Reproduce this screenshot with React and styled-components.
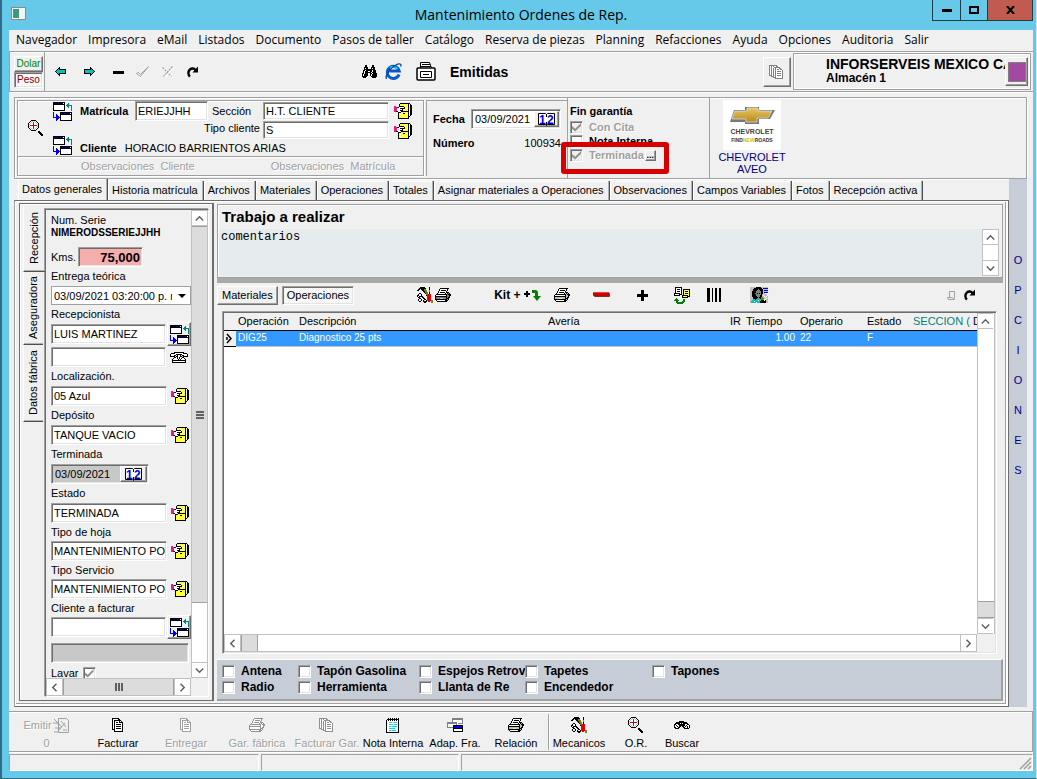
import React from 'react';
import styled, { createGlobalStyle, css } from 'styled-components';

const GlobalStyle = createGlobalStyle`
  * { box-sizing: border-box; }
  body { margin: 0; background: #f0f0f0; color: #000; font: 11px/14px "Liberation Sans", Arial, sans-serif; }
  button, input, select, textarea { font: inherit; color: inherit; margin: 0; border-radius: 0; }
  button { padding: 0; border: 0; background: none; white-space: nowrap; }
  svg { display: block; flex: none; }
`;

/* ---------- bevels ---------- */

const sunken = css`
  border: 1px solid;
  border-color: #a0a0a0 #fff #fff #a0a0a0;
  box-shadow: inset 1px 1px 0 #6d6d6d, inset -1px -1px 0 #e3e3e3;
`;

const raised = css`
  border: 1px solid;
  border-color: #fff #6d6d6d #6d6d6d #fff;
  box-shadow: inset -1px -1px 0 #a0a0a0;
`;

const etched = css`
  border: 1px solid #a0a0a0;
  box-shadow: inset 1px 1px 0 #fff, 1px 1px 0 #fff;
`;

const disabledText = css`
  color: #a0a0a0;
  text-shadow: 1px 1px 0 #fff;
`;

/* ---------- icons ---------- */

const palette = {
  k: '#000', w: '#fff', y: '#ffff33', m: '#f0148c', n: '#000080', b: '#0000f0', t: '#008080',
  r: '#e00000', o: '#808000', g: '#c0c0c0', d: '#808080', c: '#00e0e8', e: '#008000', u: '#00c4c4',
};

function Pixels({ rows, ink, ...rest }) {
  const width = Math.max(...rows.map((r) => r.length));
  return (
    <svg width={width} height={rows.length} viewBox={`0 0 ${width} ${rows.length}`} shapeRendering="crispEdges" {...rest}>
      {rows.map((row, y) =>
        [...row].map((c, x) =>
          c === '.' ? null : <rect key={`${x}-${y}`} x={x} y={y} width="1" height="1" fill={c === 'k' && ink ? ink : palette[c]} />
        )
      )}
    </svg>
  );
}

const windowsRows = [
  'kkkkkkkkkkkk.......',
  'knnnnnnnnkwk...t...',
  'kkkkkkkkkkkk..tt...',
  'kwwwwwwwwwwk.tttttt',
  'kwwwwwwwwwwk..tt..t',
  'kwwwwwwwwwwk...t..t',
  'kwwwwwwwwwwk......t',
  'kwwwwwwwwwwk......t',
  'kkkkkkkkkkkk......t',
  '...................',
  'b......kkkkkkkkkkkk',
  'b......knnnnnnnnkwk',
  'b..b...kkkkkkkkkkkk',
  'b..bb..kwwwwwwwwwwk',
  'b..bbb.kwwwwwwwwwwk',
  'bbbbbbbkwwwwwwwwwwk',
  '...bbb.kwwwwwwwwwwk',
  '...bb..kwwwwwwwwwwk',
  '...b...kkkkkkkkkkkk',
];

const cardRows = [
  '......kkkkkkkkkk..',
  '.....kyyyyyyyykwk.',
  '.....kywyywyywkwkk',
  'mm...kkkkkyyyykwkk',
  'mmmkkwwwwwkyywkwkk',
  'mmmwwwkkkkkyyykwkk',
  'mmmwwwwwkyywyykwkk',
  'mmmwwwkkkyyyyykwkk',
  'mmkkwwwkkkkkkkkwkk',
  '....kkkyyyyyyykwkk',
  '....kywyykkywykwkk',
  '....kyyyyyyyyykwkk',
  '....kyyywyyyyykwk.',
  '....kywyyyywyykk..',
  '....kyyyyyyyyyk...',
  '....kkkkkkkkkkk...',
];

const magnifierRows = [
  '...kkkkk........',
  '..kwgwgwk.......',
  '.kwgwrwgwk......',
  'kwgwwrwwgwk.....',
  'kgwwwrwwwgk.....',
  'kwrrrrrrrwk.....',
  'kgwwwrwwwgk.....',
  'kwgwwrwwgwk.....',
  '.kwgwrwgwk......',
  '..kwgwgwk.......',
  '...kkkkk.y......',
  '.........ykk....',
  '..........kkk...',
  '...........kkk..',
  '............kkk.',
  '.............kk.',
];

const printerRows = [
  '.....kkkkkkkkk..',
  '....kwwwwwwwk...',
  '....kwkkkkkwk...',
  '...kwwwwwwwk....',
  '...kwkkkkkwkkk..',
  '..kwwwwwwwkwkgk.',
  '.kkkkkkkkkkkgkkk',
  'kwwwwwwwwwwkggkk',
  'kkkkkkkkkkkkggk.',
  'kggggggggggkgkk.',
  'kggggyyygggkkk..',
  'kkkkkkkkkkkkgk..',
  '.kwwwwwwwwkkk...',
  '..kkkkkkkkkk....',
];

const darkPrinterRows = printerRows.map((r) => r.replace(/g/g, 'd').replace(/y/g, 'g'));

const toolsRows = [
  '...kkkkk....k...',
  '..kkkkkkk...k...',
  '.kk.kkkoo...k...',
  'kk...kkooo..d...',
  '......kkoo..d...',
  '.......kooo.k...',
  '..kk....koo.k...',
  '.k..k....oorrr..',
  'kk..k....krrrr..',
  'k.kkkk....rrrr..',
  '.kk..kk...rrrr..',
  '..kk..kk..rrrr..',
  '.k..k..kk.rrrr..',
  '.k..k.k..korrroo',
  '..kk..kkkk.rr.oo',
  '.......kk.....oo',
];

const binocularsRows = [
  '...kk.....kk...',
  '...kk.....kk...',
  '..kkkk...kkkk..',
  '..kwkk...kwkk..',
  '..kkkkkkkkkkk..',
  '.kkwkkkkkkwkkk.',
  '.kwkkkwwkkwkkk.',
  '.kwkkkkkkwkkkk.',
  'kkwkkkwwkkwkkkk',
  'kwkkkk..kwkkkkk',
  'kwkkkk..kwkkkkk',
  'kkkkk....kkkkkk',
  '.kkk......kkkk.',
];

const fieldGlassRows = [
  '.....kkkkk......',
  '..kkkkkkkkkkk...',
  '.kkkkkwkwkkkkk..',
  'kkwwkkkkkkkwwkk.',
  'kwkwwkkkkkkwkwwk',
  'kwwkwkk.kkwkwkwk',
  'kkwwkk...kkwwkwk',
  '.kkkk.....kkkkk.',
];

const docsRows = [
  'kkkkkkk.....',
  'kwwwwwkk....',
  'kwkkkkkkk...',
  'kwkwwwwkwk..',
  'kwkwkkwkkkk.',
  'kwkwwwwwwwk.',
  'kwkwkkkkkwk.',
  'kwkwwwwwwwk.',
  'kwkwkkkkkwk.',
  'kwkwwwwwwwk.',
  'kwkwkkkkkwk.',
  'kkkwwwwwwwk.',
  '..kwwwwwwwk.',
  '..kkkkkkkkk.',
];

const manyDocsRows = [
  'kkkkkkkk........',
  'kwkwkwwkk.......',
  'kwkwwkkkkkk.....',
  'kwkwkwkwwwkk....',
  'kwkwkwkwkkwkk...',
  'kwkwkwkwwwwwwk..',
  'kwkwkwkwkkkkwk..',
  'kwkwkwkwwwwwwk..',
  'kwkwkwkwkkkkwk..',
  'kwkwkwkwwwwwwk..',
  'kkkwkwkwkkkkwk..',
  '..kkkwkwwwwwwk..',
  '....kkkwwwwwwk..',
  '......kkkkkkkk..',
];

const notepadRows = [
  '..k.k.k.k.k.k.',
  '.kkkkkkkkkkkk.',
  'kwkwkwkwkwkwk.',
  'kwwwwwwwwwwwk.',
  'kwwcccwccccwk.',
  'kwwwwwwwwwwwk.',
  'kwwccccwcccwk.',
  'kwwwwwwwwwwwk.',
  'kwwccwcccccwk.',
  'kwwwwwwwwwwwk.',
  'kwwccccccwwwk.',
  'kwwwwwwwwwwwk.',
  'kwwccwccccwwk.',
  'kwwwwwwwwwwwk.',
  'kkkkkkkkkkkkk.',
];

const adapRows = [
  '.....ddddddddddd',
  '.....ddddddddddd',
  '.....dwwwwwwwwwd',
  '.....dwwwwwwwwwd',
  'ddddddddddwwwwwd',
  'ddddddddddwddddd',
  'dwwwwwwwwd......',
  'dwwwwwkkkkkkkkkk',
  'dwwwwwkbbbbbbbbk',
  'ddddddkbbbbbbbbk',
  '......kkkkkkkkkk',
  '......kwwwwwwwwk',
  '......kwwwwwwwwk',
  '......kkkkkkkkkk',
];

const phoneRows = [
  '....kkkkkkkkkk....',
  '.kkkkwwwwwwwwkkkk.',
  'kwwwwwkkkkkkwwwwwk',
  'kwwwkk.kwwk.kkwwwk',
  'kkkkk.kkwwkk.kkkkk',
  '....kkwkwkwwkk....',
  '...kwwwkwkwkwwk...',
  '..kwwwwwkwkwwwwk..',
  '..kkkkkkkkkkkkkk..',
  '..kwwwwwwwwwwwwk..',
  '..kkkkkkkkkkkkkk..',
];

const docPairRows = [
  '.kkkkkkk..........',
  '.kwwwwwk..........',
  '.kwnnnwk.kkkkkkk..',
  '.kwwwwwk.kyyyyyk..',
  '.kwnnnwk.kynnnyk..',
  '.kwwwwwk.kyyyyyk..',
  'kkkkkkwk.kynnnyk..',
  'kwwwwkkk.kyyyyyk..',
  'kkkkkk..kkkkkkyk..',
  '........kyyyykkk..',
  '........kkkkkk....',
  '..e...............',
  '.eee.....ee.......',
  'eeeee....ee.......',
  '..ee....eee.......',
  '..eeeeeeee........',
  '...eeeeee.........',
];

const faceRows = [
  'ggggggkkkkkggggggg',
  'ggggkkkkkkkkgbbbbb',
  'gggkkkkkdkkkkggggg',
  'gggkkkkdddkkkgbbbb',
  'ggkkkkdddddkkggggg',
  'ggkkkkdddddkkgbbbb',
  'ggkkkddkdkdkkggwww',
  'ggkkkkdddddkgggggw',
  'ggkkkkddddkkgwgggw',
  'ggkkkkkdddkkggwgwg',
  'gggkkkkkdkkooggwgg',
  'gggkkkkdddkoooggwg',
  'ggguukuuuuuooowwgg',
  'gguuuuuuwuukkkwkgg',
  'guuuwuuuuukkkkkkgg',
  'guuuuuwuuukkkkkkgg',
];

const leftRows = [
  '....k......',
  '...kk......',
  '..kukkkkkkk',
  '.kuuuuuuuuk',
  'kuuuuuuuuuk',
  '.kuuuuuuuuk',
  '..kukkkkkkk',
  '...kk......',
  '....k......',
];

const rightRows = leftRows.map((r) => [...r].reverse().join(''));

const Refresh = () => (
  <svg width="12" height="12" viewBox="0 0 12 12">
    <path d="M3 10.500C1 9 .8 5.500 2.800 3.600 4.500 2 7 2.200 8.600 4" fill="none" stroke="#000" strokeWidth="2.400" />
    <path d="M11 .5v6H5.500z" />
  </svg>
);

const Cabinet = () => (
  <svg width="20" height="19" viewBox="0 0 20 19" fill="#fff" stroke="#000">
    <path d="M4.500 6V.5h9l2 5.500" />
    <path d="M6 2.500h8" />
    <rect x="1" y="6" width="18" height="12" rx="1" strokeWidth="1.500" />
    <path d="M4.500 9.500h11v6h-11z" />
    <path d="M7 12.500h6M5 4.500h10" />
  </svg>
);

const Globe = () => (
  <svg width="17" height="17" viewBox="0 0 17 17" fill="none">
    <path d="M14 11.500A6 6 0 1 1 14.200 8H4.500" stroke="#0a58c8" strokeWidth="3" />
    <path d="M12.500 6A5 5 0 0 0 5 5" stroke="#28d4f0" strokeWidth="1.500" />
    <path d="M1.500 16C-.5 12.500 6 4 12.500 1.200 16 0 16.500 2 15.500 3.500" stroke="#0848a0" strokeWidth="1.300" />
  </svg>
);

const CheckMark = () => (
  <svg width="14" height="12" viewBox="0 0 14 12" fill="none">
    <path d="M1.500 8.500l3 3 9-9" stroke="#fff" />
    <path d="M.5 7.500l2-1 2 2 8-8-8 10z" stroke="#a0a0a0" />
  </svg>
);

const Cross = () => (
  <svg width="12" height="12" viewBox="0 0 12 12" fill="none">
    <path d="M1.500 2.500l9 9M11.500 1.500l-9 10" stroke="#fff" strokeWidth="1.500" />
    <path d="M.5 1.500l9 9M10.500.5l-9 10" stroke="#a0a0a0" strokeWidth="1.300" strokeDasharray="2 1" />
  </svg>
);

const Dash = ({ size = 11, color = '#000' }) => (
  <svg width={size} height="4" viewBox={`0 0 ${size} 4`}><rect width={size} height="3" y="1" fill={color} /></svg>
);

const RedMinus = () => (
  <svg width="17" height="6" viewBox="0 0 17 6">
    <rect x="1" y="1" width="16" height="4" rx="1" fill="#803030" />
    <rect width="16" height="4" rx="1" fill="#c80000" />
    <rect x="1" y="0" width="14" height="1" fill="#f04040" />
  </svg>
);

const Plus = () => (
  <svg width="11" height="11" viewBox="0 0 11 11"><path d="M4 0h3v4h4v3H7v4H4V7H0V4h4z" /></svg>
);

const PlusArrow = () => (
  <svg width="17" height="13" viewBox="0 0 17 13">
    <path d="M2 2h2v2h2v2H4v2H2V6H0V4h2z" />
    <path d="M8 1h3c2 0 3 1 3 3v3h3l-4 5-4-5h2V4H8z" fill="#008000" />
  </svg>
);

const Barcode = () => (
  <svg width="14" height="14" viewBox="0 0 14 14"><path d="M0 0h3v14H0zM5 0h1v14H5zM8 0h2v14H8zM12 0h2v14h-2z" /></svg>
);

const SmallDoc = () => (
  <svg width="9" height="9" viewBox="0 0 9 9" fill="none" stroke="#a0a0a0"><path d="M2.500 6.500v-6h5v7M.5 6.500h5l2 2h-6z" /></svg>
);

const Chevron = ({ dir }) => {
  const turn = { up: 0, right: 90, down: 180, left: 270 }[dir];
  return (
    <svg width="9" height="9" viewBox="0 0 9 9">
      <path d="M.8 6.500L4.500 2.800 8.200 6.500" transform={`rotate(${turn} 4.500 4.500)`} fill="none" stroke="#606060" strokeWidth="1.500" />
    </svg>
  );
};

const Calendar = () => (
  <svg width="20" height="15" viewBox="0 0 20 15">
    <path d="M1.500 1.500h7l1 1 1-1h7v11h-7l-1 1-1-1h-7z" fill="#fff" stroke="#000" />
    <text x="2" y="12" fontSize="12" fontWeight="bold" fill="#0000e0" fontFamily="Liberation Sans, sans-serif">1</text>
    <text x="10" y="12" fontSize="12" fontWeight="bold" fill="#0000e0" fontFamily="Liberation Sans, sans-serif">2</text>
    <path d="M9.500 2v3M9.500 10v3" stroke="#000" />
  </svg>
);

const Stamp = () => (
  <svg width="17" height="17" viewBox="0 0 17 17" fill="#f0f0f0" stroke="#a0a0a0">
    <path d="M5.500 1.500h8l2 2v12h-10z" />
    <path d="M1 2l6 6M0 6h4l5 4M2 11h6M5 14l7-8M8 4l5 6M10 13h4M1 15h5" fill="none" />
  </svg>
);

const ChevroletLogo = () => (
  <svg width="58" height="50" viewBox="0 0 58 50">
    <defs>
      <linearGradient id="gold" x1="0" y1="0" x2="0" y2="1">
        <stop offset="0" stopColor="#e8c860" /><stop offset="1" stopColor="#b88a20" />
      </linearGradient>
    </defs>
    <rect width="58" height="50" fill="#fff" />
    <path d="M11 10h11V7h14v3h16l-5 9H36v5H22v-2H7z" fill="#777" />
    <path d="M12 11h12V8h11v3h14l-4 7H34v4H23v-3H9z" fill="url(#gold)" stroke="#ddd" strokeWidth=".8" />
    <text x="29" y="34" textAnchor="middle" fontSize="7" fontWeight="bold" fill="#444" fontFamily="Liberation Sans, sans-serif">CHEVROLET</text>
    <text x="29" y="42" textAnchor="middle" fontSize="5" fontWeight="bold" fill="#333" fontFamily="Liberation Sans, sans-serif">
      FIND<tspan fill="#e8b800">NEW</tspan>ROADS
    </text>
  </svg>
);

/* ---------- window frame ---------- */

const Frame = styled.div`
  display: flex;
  flex-direction: column;
  min-height: 100vh;
  padding: 0 3px 7px 7px;
  border: solid #2e6f86;
  border-width: 0 1px 1px 2px;
  border-right-color: #cfe4ec;
  background: #66c9ea;
`;

const TitleBar = styled.header`
  display: grid;
  grid-template-columns: 1fr auto 1fr;
  height: 30px;
`;

const AppIcon = styled.div`
  width: 15px;
  height: 13px;
  margin: 7px 0 0 2px;
  border: 1px solid #8a8a8a;
  background: linear-gradient(90deg, #3a9a80 0 7px, #f4f4f4 7px);
  box-shadow: inset 0 0 0 1px #f4f4f4;
`;

const Title = styled.h1`
  margin: 0;
  font: 14px/30px "Open Sans", "Noto Sans", sans-serif;
`;

const WindowButtons = styled.div`
  display: flex;
  justify-self: end;
  height: 21px;
  border: solid #1c3c48;
  border-width: 0 1px 1px;
`;

const WindowButton = styled.button`
  display: grid;
  place-items: center;
  width: ${(p) => (p.$close ? 45 : 27)}px;
  background: ${(p) => (p.$close ? '#c15b50' : 'transparent')};
  & + & { border-left: 1px solid #1c3c48; }
`;

const Client = styled.main`
  display: flex;
  flex-direction: column;
  flex: 1;
  min-width: 0;
  background: #f0f0f0;
`;

const MenuBar = styled.nav`
  display: flex;
  gap: 11px;
  height: 21px;
  padding-left: 7px;
  overflow: hidden;
  a {
    color: #000;
    text-decoration: none;
    white-space: nowrap;
    font: 12px/20px "Open Sans", "Noto Sans", sans-serif;
  }
`;

/* ---------- top toolbar ---------- */

const TopBar = styled.div`
  display: flex;
  align-items: stretch;
  height: 41px;
  border: solid #a0a0a0;
  border-width: 1px 0;
  box-shadow: inset 0 1px 0 #fff, 0 1px 0 #fff;
`;

const CurrencyBox = styled.div`
  display: flex;
  flex-direction: column;
  width: 36px;
  padding: 4px 1px 2px 4px;
  border: solid #a0a0a0;
  border-width: 0 1px;
  font-size: 10px;
`;

const CurrencyButton = styled.button`
  height: 16px;
  color: ${(p) => p.$color};
  ${(p) => (p.$on ? sunken : raised)}
  background: ${(p) => (p.$on ? '#f8f8f8' : '#f0f0f0')};
`;

const ToolRow = styled.div`
  display: flex;
  align-items: center;
  gap: ${(p) => p.$gap}px;
  padding-left: ${(p) => p.$indent}px;
`;

const IconButton = styled.button`
  display: grid;
  place-items: center;
  min-width: ${(p) => p.$w || 16}px;
  min-height: 20px;
`;

const BoxButton = styled.button`
  display: grid;
  place-items: center;
  width: ${(p) => p.$w}px;
  height: ${(p) => p.$h}px;
  background: #f0f0f0;
  ${raised}
`;

const Emitidas = styled.strong`
  font-size: 14px;
`;

const Right = styled.div`
  display: flex;
  align-items: center;
  margin-left: auto;
  gap: 2px;
  padding-right: ${(p) => p.$pad || 2}px;
`;

const Company = styled.div`
  position: relative;
  width: 238px;
  height: 37px;
  padding: 3px 0 0 32px;
  overflow: hidden;
  white-space: nowrap;
  font-weight: bold;
  font-size: 12px;
  ${etched}
  box-shadow: inset 1px 1px 0 #fff, inset -1px -1px 0 #fff;
  div:first-child { font-size: 14px; }
`;

const ColorButton = styled(BoxButton)`
  position: absolute;
  top: 3px;
  right: 2px;
  &::after {
    content: '';
    width: 16px;
    height: 18px;
    background: #a349a4;
    border: 1px solid #808080;
  }
`;

/* ---------- order header ---------- */

const OrderHeader = styled.section`
  display: flex;
  height: 82px;
  margin: 5px 6px 0 5px;
  border: 1px solid #a0a0a0;
  box-shadow: inset 1px 1px 0 #fff, 1px 1px 0 #fff;
`;

const Customer = styled.div`
  display: flex;
  flex-direction: column;
  width: 407px;
  margin: 2px;
  ${etched}
`;

const CustomerGrid = styled.div`
  display: grid;
  grid-template-columns: 35px 27px 55px 77px 51px 131px 1fr;
  grid-template-rows: 20px 14px 20px;
  align-items: center;
  flex: 1;
`;

const Cell = styled.div`
  display: flex;
  gap: 8px;
  grid-area: ${(p) => p.$area};
  align-self: ${(p) => p.$align || 'center'};
  justify-self: ${(p) => p.$justify || 'start'};
  white-space: nowrap;
`;

const BoldLabel = styled.label`
  font-weight: bold;
`;

const Field = styled.input`
  display: block;
  width: ${(p) => (p.$w ? `${p.$w}px` : '100%')};
  height: ${(p) => p.$h || 20}px;
  padding: 0 0 0 2px;
  outline: 0;
  background: ${(p) => p.$bg || '#fff'};
  ${sunken}
`;

const KmsField = styled(Field)`
  padding-right: 2px;
  font-weight: bold;
  font-size: 13px;
  text-align: right;
`;

const Notes = styled.div`
  display: flex;
  height: 19px;
  padding-left: 63px;
  gap: 76px;
  border-top: 1px solid #a0a0a0;
  box-shadow: inset 0 1px 0 #fff;
  button { ${disabledText} white-space: pre; }
`;

const DateBlock = styled.div`
  display: grid;
  grid-template-columns: 38px 1fr;
  grid-template-rows: 24px 24px;
  align-content: start;
  align-items: center;
  width: 141px;
  padding: 6px 7px 0 6px;
  border-left: 1px solid #a0a0a0;
  border-top: 1px solid #a0a0a0;
  margin: 2px 0;
`;

const DateField = styled.div`
  display: flex;
  width: ${(p) => p.$w}px;
  height: 20px;
  background: ${(p) => p.$bg || '#fff'};
  ${sunken}
  padding: 1px;
  input {
    flex: 1;
    min-width: 0;
    padding: 0 2px;
    border: 0;
    outline: 0;
    background: transparent;
  }
`;

const OrderNumber = styled.output`
  justify-self: end;
`;

const Flags = styled.div`
  position: relative;
  display: flex;
  flex-direction: column;
  width: 142px;
  padding: 6px 0 0 2px;
  border-left: 1px solid #a0a0a0;
  font-weight: bold;
  > strong { height: 16px; }
`;

const Tick = styled.label`
  display: flex;
  align-items: center;
  gap: 6px;
  height: ${(p) => p.$h || 14}px;
  overflow: hidden;
  white-space: nowrap;
  ${(p) => p.$off && disabledText}
`;

const TickBox = styled.input`
  flex: none;
  appearance: none;
  width: 13px;
  height: 13px;
  background: #fff;
  ${sunken}
  &:disabled { background: #f0f0f0; }
  &:checked::before {
    content: '';
    display: block;
    width: 9px;
    height: 9px;
    margin: 1px;
    background: #909090;
    clip-path: polygon(0 40%, 35% 70%, 100% 5%, 100% 35%, 35% 100%, 0 70%);
  }
`;

const FlagRow = styled.div`
  display: flex;
  align-items: center;
  gap: 1px;
`;

const DotsButton = styled.button`
  width: 11px;
  height: 11px;
  font: bold 9px/3px "Liberation Sans", sans-serif;
  ${raised}
`;

const Highlight = styled.div`
  position: absolute;
  left: -7px;
  top: 44px;
  width: 108px;
  height: 32px;
  border: 5px solid #d90000;
  border-radius: 3px;
  pointer-events: none;
`;

const Car = styled.div`
  flex: 1;
  padding: 2px 8px;
  border-left: 1px solid #a0a0a0;
  color: #000080;
  line-height: 12px;
  > div { width: 68px; text-align: center; }
  svg { margin: 0 auto 1px; }
`;

/* ---------- pages ---------- */

const Body = styled.div`
  display: flex;
  flex: 1;
  min-height: 0;
  margin: 0 6px 4px 5px;
`;

const Pages = styled.div`
  display: flex;
  flex-direction: column;
  flex: 1;
  min-width: 0;
`;

const Tabs = styled.div`
  display: flex;
  align-items: flex-end;
  height: 21px;
  padding-left: 4px;
`;

const Tab = styled.button`
  height: ${(p) => (p.$on ? 21 : 19)}px;
  padding: 0 5px 2px 4px;
  border-right: 1px solid #505050;
  box-shadow: inset -1px 0 0 #b0b0b0, inset 1px 1px 0 #fff;
`;

const Page = styled.div`
  display: flex;
  flex: 1;
  gap: 3px;
  min-height: 0;
  padding: 2px 5px 5px 4px;
  border: 1px solid;
  border-color: #6d6d6d #6d6d6d #6d6d6d #a0a0a0;
  box-shadow: inset 1px 1px 0 #fff, inset -2px -2px 0 #fff, inset -3px -3px 0 #a0a0a0;
`;

const Options = styled.button`
  display: flex;
  flex-direction: column;
  justify-content: flex-start;
  width: 18px;
  padding-top: 66px;
  background: #c6cdd7;
  color: #000080;
  line-height: 30px;
  text-align: center;
  span { display: block; height: 30px; width: 18px; }
`;

const Side = styled.aside`
  display: flex;
  width: 195px;
  padding: 2px 3px 3px;
  border: solid #6d6d6d;
  border-width: 1px 2px 1px 1px;
  box-shadow: inset 1px 1px 0 #fff;
`;

const SideTabs = styled.div`
  display: flex;
  flex-direction: column;
  width: 22px;
`;

const SideTab = styled.button`
  height: ${(p) => p.$h}px;
  width: ${(p) => (p.$on ? 22 : 20)}px;
  padding-left: 2px;
  writing-mode: vertical-rl;
  transform: rotate(180deg);
  text-align: center;
  border-top: 1px solid #505050;
  border-right: 1px solid #fff;
  box-shadow: inset 0 1px 0 #b0b0b0;
`;

const SideScroller = styled.div`
  display: grid;
  grid-template-columns: 1fr 17px;
  grid-template-rows: 1fr 18px;
  flex: 1;
  min-width: 0;
  margin-top: 3px;
  border: 1px solid;
  border-color: #6d6d6d #fff #fff #6d6d6d;
  box-shadow: -1px -1px 0 #a0a0a0;
`;

const Form = styled.form`
  position: relative;
  min-width: 0;
  height: 0;
  min-height: 100%;
  padding: 3px 0 0 5px;
  overflow: hidden;
`;

const Line = styled.div`
  display: flex;
  align-items: center;
  gap: ${(p) => p.$gap || 4}px;
  height: 20px;
  margin-top: ${(p) => p.$top || 0}px;
`;

const Caption = styled.label`
  display: block;
  height: ${(p) => (p.$tight ? 18 : 19)}px;
  line-height: ${(p) => (p.$tight ? 18 : 19)}px;
`;

const Serial = styled.output`
  display: block;
  font-weight: bold;
  font-size: 10px;
  line-height: 12px;
`;

const Combo = styled.div`
  position: relative;
  width: 140px;
  select {
    width: 100%;
    height: 19px;
    padding: 0 18px 0 2px;
    appearance: none;
    border: 1px solid #a0a0a0;
    background: #fff;
    text-overflow: clip;
  }
  &::after {
    content: '';
    position: absolute;
    right: 5px;
    top: 8px;
    border: 4px solid transparent;
    border-top-color: #000;
    border-bottom: 0;
  }
`;

/* ---------- scroll bars ---------- */

const Track = styled.div`
  display: flex;
  flex-direction: ${(p) => (p.$row ? 'row' : 'column')};
  background: #fff;
  border: solid #c0c0c0;
  border-width: ${(p) => (p.$row ? '1px 0' : '0 1px')};
`;

const ScrollButton = styled.button`
  display: grid;
  place-items: center;
  flex: none;
  width: ${(p) => (p.$row ? 17 : 15)}px;
  height: ${(p) => (p.$row ? 'auto' : '16px')};
  border: solid #c0c0c0;
  border-width: ${(p) => (p.$row ? '0 1px' : '1px 0')};
`;

const Thumb = styled.div`
  display: grid;
  place-items: center;
  flex: ${(p) => (p.$size ? `0 0 ${p.$size}px` : 1)};
  border: solid #a0a0a0;
  border-width: ${(p) => (p.$row ? '0 1px' : '1px 0')};
  background: #dcdcdc;
`;

const Space = styled.div`
  flex: 1;
`;

const Grip = ({ row }) => (
  <svg width="8" height="8" viewBox="0 0 8 8" fill="none" stroke="#606060" strokeWidth="2" shapeRendering="crispEdges">
    <path d={row ? 'M1 0v8M4 0v8M7 0v8' : 'M0 1h8M0 4h8M0 7h8'} />
  </svg>
);

function ScrollBar({ row, children }) {
  return (
    <Track $row={row}>
      <ScrollButton type="button" $row={row} aria-label={row ? 'Izquierda' : 'Arriba'}><Chevron dir={row ? 'left' : 'up'} /></ScrollButton>
      {children || <Space />}
      <ScrollButton type="button" $row={row} aria-label={row ? 'Derecha' : 'Abajo'}><Chevron dir={row ? 'right' : 'down'} /></ScrollButton>
    </Track>
  );
}

/* ---------- work area ---------- */

const Work = styled.div`
  display: flex;
  flex-direction: column;
  flex: 1;
  min-width: 0;
  padding-top: 1px;
`;

const Job = styled.div`
  height: 74px;
  padding: 1px 3px 1px 1px;
  border: 1px solid #a0a0a0;
  box-shadow: inset 1px 1px 0 #fff;
  h2 {
    margin: 0;
    padding: 0 0 2px 3px;
    font-size: 15px;
    line-height: 21px;
  }
`;

const Comments = styled.div`
  display: flex;
  height: 47px;
  background: #e6ebee;
  textarea {
    flex: 1;
    padding: 1px 2px;
    border: 0;
    outline: 0;
    resize: none;
    overflow: hidden;
    background: transparent;
    font: 12px/15px "Liberation Mono", monospace;
  }
`;

const WorkBar = styled.div`
  display: flex;
  align-items: center;
  height: 33px;
  padding-bottom: 4px;
  border-top: 5px solid #a9a9a9;
`;

const ModeButton = styled.button`
  height: 19px;
  padding: 0 4px;
  ${(p) => (p.$on ? sunken : raised)}
  background: ${(p) => (p.$on ? 'repeating-conic-gradient(#fff 0 25%, #f0f0f0 0 50%) 0 0 / 2px 2px' : '#f0f0f0')};
  & + & { margin-left: 4px; }
`;

const KitButton = styled.button`
  display: flex;
  align-items: center;
  gap: 4px;
  font-weight: bold;
  font-size: 12px;
`;

const GridBox = styled.div`
  display: grid;
  grid-template-columns: 1fr 18px;
  grid-template-rows: 1fr 18px;
  flex: 1;
  margin: 0 6px 5px 5px;
  background: #fff;
  ${sunken}
  padding: 1px;
`;

const Sheet = styled.div`
  grid-row: 1;
  min-width: 0;
  overflow: hidden;
`;

const Table = styled.table`
  width: 100%;
  table-layout: fixed;
  border-collapse: collapse;
  th, td {
    padding: 0 0 0 2px;
    overflow: hidden;
    white-space: nowrap;
    text-align: left;
    font-weight: normal;
  }
  th {
    height: 17px;
    background: #f0f0f0;
    border-bottom: 1px solid #000;
  }
  td {
    height: 16px;
    background: #3399ff;
    color: #fff;
    font-size: 10px;
    border-bottom: 1px solid #c0c0c0;
  }
  .teal { color: #008080; }
  td:first-child {
    background: #f0f0f0;
    border-bottom-color: #000;
  }
  .num {
    padding-right: 3px;
    text-align: right;
  }
`;

const Corner = styled.div`
  background: #f0f0f0;
`;

const Equipment = styled.fieldset`
  display: grid;
  grid-template-columns: 76px 121px 106px 127px 1fr;
  grid-auto-rows: 16px;
  height: 42px;
  min-width: 0;
  margin: 0;
  padding: 3px 0 0 5px;
  border: solid;
  border-width: 1px 2px 2px 0;
  border-color: #fff #a0a0a0 #a0a0a0;
  background: #c6cdd7;
  font-weight: bold;
  font-size: 12px;
`;

/* ---------- bottom ---------- */

const BottomBar = styled.div`
  display: flex;
  height: 41px;
  padding-top: 2px;
  border: solid #a0a0a0;
  border-width: 1px 1px 1px 0;
  box-shadow: inset 0 1px 0 #fff, 0 1px 0 #fff;
`;

const BottomButton = styled.button`
  display: flex;
  flex-direction: column;
  align-items: center;
  width: ${(p) => p.$w}px;
  ${(p) => p.disabled && disabledText}
`;

const BottomIcon = styled.span`
  display: flex;
  align-items: center;
  height: 22px;
  gap: 1px;
`;

const Divider = styled.div`
  width: 2px;
  margin-bottom: 1px;
  background: #a0a0a0;
  border-right: 1px solid #fff;
`;

const StatusBar = styled.footer`
  display: grid;
  grid-template-columns: 250px 198px 1fr;
  gap: 2px;
  height: 17px;
  margin-top: 2px;
`;

const StatusCell = styled.div`
  display: flex;
  justify-content: flex-end;
  align-items: flex-end;
  border: 1px solid;
  border-color: #a0a0a0 #fff #fff #a0a0a0;
`;

const menu = ['Navegador', 'Impresora', 'eMail', 'Listados', 'Documento', 'Pasos de taller', 'Catálogo', 'Reserva de piezas',
  'Planning', 'Refacciones', 'Ayuda', 'Opciones', 'Auditoria', 'Salir'];

const tabs = ['Datos generales', 'Historia matrícula', 'Archivos', 'Materiales', 'Operaciones', 'Totales',
  'Asignar materiales a Operaciones', 'Observaciones', 'Campos Variables', 'Fotos', 'Recepción activa'];

const equipment = ['Antena', 'Tapón Gasolina', 'Espejos Retrov', 'Tapetes', 'Tapones', 'Radio', 'Herramienta', 'Llanta de Re', 'Encendedor'];

const columns = [['', 12], ['Operación', 61], ['Descripción', 249], ['Avería'], ['IR', 16], ['Tiempo', 54], ['Operario', 67],
  ['Estado', 46], ['SECCION (.', 60, 'teal'], ['D', 6]];

const Card = () => <Pixels rows={cardRows} />;

function LookupField({ id, label, value, tight }) {
  return (
    <>
      <Caption htmlFor={id} $tight={tight}>{label}</Caption>
      <Line>
        <Field id={id} $w={116} defaultValue={value} />
        <IconButton type="button" aria-label={`Buscar ${label}`}><Card /></IconButton>
      </Line>
    </>
  );
}

function TopToolbar() {
  return (
    <TopBar>
      <CurrencyBox>
        <CurrencyButton $color="#008000">Dolar</CurrencyButton>
        <CurrencyButton $color="#800000" $on>Peso</CurrencyButton>
      </CurrencyBox>
      <ToolRow $gap={9} $indent={7}>
        <IconButton aria-label="Anterior"><Pixels rows={leftRows} /></IconButton>
        <IconButton aria-label="Siguiente" $w={24}><Pixels rows={rightRows} /></IconButton>
        <IconButton aria-label="Borrar"><Dash /></IconButton>
        <IconButton aria-label="Aceptar"><CheckMark /></IconButton>
        <IconButton aria-label="Cancelar"><Cross /></IconButton>
        <IconButton aria-label="Refrescar"><Refresh /></IconButton>
      </ToolRow>
      <ToolRow $gap={8} $indent={160}>
        <IconButton aria-label="Buscar"><Pixels rows={binocularsRows} /></IconButton>
        <IconButton aria-label="Internet"><Globe /></IconButton>
        <IconButton aria-label="Archivo" $w={32}><Cabinet /></IconButton>
        <Emitidas>Emitidas</Emitidas>
      </ToolRow>
      <Right>
        <BoxButton $w={28} $h={30} aria-label="Copias"><Pixels rows={manyDocsRows} ink="#808080" /></BoxButton>
        <Company>
          <div>INFORSERVEIS MEXICO CALI</div>
          <div>Almacén 1</div>
          <ColorButton $w={23} $h={29} aria-label="Color" />
        </Company>
      </Right>
    </TopBar>
  );
}

function Header() {
  return (
    <OrderHeader>
      <Customer>
        <CustomerGrid>
          <Cell $area="1 / 1 / 4 / 2" $justify="center"><IconButton aria-label="Zoom"><Pixels rows={magnifierRows} /></IconButton></Cell>
          <Cell $area="1 / 2"><IconButton aria-label="Abrir vehículo"><Pixels rows={windowsRows} /></IconButton></Cell>
          <Cell $area="1 / 3"><BoldLabel htmlFor="matricula">Matrícula</BoldLabel></Cell>
          <Cell $area="1 / 4"><Field id="matricula" $w={73} defaultValue="ERIEJJHH" /></Cell>
          <Cell $area="1 / 5"><label htmlFor="seccion">Sección</label></Cell>
          <Cell $area="1 / 6"><Field id="seccion" $w={126} $h={18} defaultValue="H.T. CLIENTE" /></Cell>
          <Cell $area="1 / 7"><IconButton aria-label="Buscar sección"><Card /></IconButton></Cell>
          <Cell $area="2 / 4 / 3 / 6" $justify="end"><label htmlFor="tipo">Tipo cliente&nbsp;</label></Cell>
          <Cell $area="2 / 6 / 4 / 7" $align="start"><Field id="tipo" $w={126} $h={18} defaultValue="S" /></Cell>
          <Cell $area="2 / 7 / 4 / 8" $align="start"><IconButton aria-label="Buscar tipo"><Card /></IconButton></Cell>
          <Cell $area="3 / 2"><IconButton aria-label="Abrir cliente"><Pixels rows={windowsRows} /></IconButton></Cell>
          <Cell $area="3 / 3 / 4 / 7" $align="end"><strong>Cliente</strong><span>HORACIO BARRIENTOS ARIAS</span></Cell>
        </CustomerGrid>
        <Notes>
          <button disabled>{'Observaciones  Cliente'}</button>
          <button disabled>{'Observaciones  Matrícula'}</button>
        </Notes>
      </Customer>
      <DateBlock>
        <BoldLabel htmlFor="fecha">Fecha</BoldLabel>
        <DateField $w={90}>
          <input id="fecha" defaultValue="03/09/2021" />
          <BoxButton $w={25} $h={16} aria-label="Calendario"><Calendar /></BoxButton>
        </DateField>
        <strong>Número</strong>
        <OrderNumber>100934</OrderNumber>
      </DateBlock>
      <Flags>
        <strong>Fin garantía</strong>
        <Tick $off><TickBox type="checkbox" defaultChecked disabled />Con Cita</Tick>
        <Tick><TickBox type="checkbox" />Nota Interna</Tick>
        <FlagRow>
          <Tick $off><TickBox type="checkbox" defaultChecked disabled />Terminada</Tick>
          <DotsButton aria-label="Detalle">...</DotsButton>
        </FlagRow>
        <Highlight />
      </Flags>
      <Car>
        <div>
          <ChevroletLogo />
          CHEVROLET AVEO
        </div>
      </Car>
    </OrderHeader>
  );
}

function SidePanel() {
  return (
    <Side>
      <SideTabs>
        <SideTab $h={66} $on>Recepción</SideTab>
        <SideTab $h={73}>Aseguradora</SideTab>
        <SideTab $h={77}>Datos fábrica</SideTab>
      </SideTabs>
      <SideScroller>
        <Form>
          <div>Num. Serie</div>
          <Serial>NIMERODSSERIEJJHH</Serial>
          <Line $top={8} $gap={2}>
            <label htmlFor="kms">Kms.</label>
            <KmsField id="kms" $w={65} $bg="#f6adad" defaultValue="75,000" />
          </Line>
          <Caption htmlFor="entrega">Entrega teórica</Caption>
          <Combo>
            <select id="entrega"><option>03/09/2021 03:20:00 p. m.</option></select>
          </Combo>
          <Caption htmlFor="recep">Recepcionista</Caption>
          <Line $gap={1}>
            <Field id="recep" $w={115} defaultValue="LUIS MARTINEZ" />
            <BoxButton type="button" $w={24} $h={24} aria-label="Abrir"><Pixels rows={windowsRows} /></BoxButton>
          </Line>
          <Line $top={3}>
            <Field $w={115} aria-label="Teléfono" />
            <Pixels rows={phoneRows} />
          </Line>
          <LookupField id="loc" label="Localización." value="05 Azul" />
          <LookupField id="dep" label="Depósito" value="TANQUE VACIO" />
          <Caption htmlFor="term">Terminada</Caption>
          <DateField $w={98} $bg="#c8c8c8">
            <input id="term" defaultValue="03/09/2021" />
            <BoxButton type="button" $w={27} $h={16} aria-label="Calendario"><Calendar /></BoxButton>
          </DateField>
          <LookupField id="estado" label="Estado" value="TERMINADA" />
          <LookupField id="hoja" label="Tipo de hoja" value="MANTENIMIENTO PO" tight />
          <LookupField id="servicio" label="Tipo Servicio" value="MANTENIMIENTO PO" tight />
          <Caption htmlFor="facturar" $tight>Cliente a facturar</Caption>
          <Line $gap={1}>
            <Field id="facturar" $w={115} />
            <BoxButton type="button" $w={24} $h={24} aria-label="Abrir"><Pixels rows={windowsRows} /></BoxButton>
          </Line>
          <Line $top={6}><Field $w={138} $bg="#c8c8c8" disabled aria-label="Cliente" /></Line>
          <Line><label htmlFor="lavar">Lavar</label><TickBox id="lavar" type="checkbox" defaultChecked /></Line>
        </Form>
        <ScrollBar><Thumb $size={377}><Grip /></Thumb><Space /></ScrollBar>
        <ScrollBar row><Thumb $row><Grip row /></Thumb></ScrollBar>
        <Corner />
      </SideScroller>
    </Side>
  );
}

function WorkPanel() {
  return (
    <Work>
      <Job>
        <h2>Trabajo a realizar</h2>
        <Comments>
          <textarea defaultValue="comentarios" aria-label="Trabajo a realizar" />
          <ScrollBar />
        </Comments>
      </Job>
      <WorkBar>
        <ModeButton>Materiales</ModeButton>
        <ModeButton $on>Operaciones</ModeButton>
        <ToolRow $gap={2} $indent={63}>
          <IconButton aria-label="Herramientas"><Pixels rows={toolsRows} /></IconButton>
          <IconButton aria-label="Imprimir"><Pixels rows={darkPrinterRows} /></IconButton>
        </ToolRow>
        <ToolRow $gap={13} $indent={43}>
          <KitButton>Kit + <PlusArrow /></KitButton>
          <IconButton aria-label="Imprimir kit"><Pixels rows={printerRows} /></IconButton>
        </ToolRow>
        <ToolRow $gap={22} $indent={23}>
          <IconButton aria-label="Quitar"><RedMinus /></IconButton>
          <IconButton aria-label="Añadir" $w={20}><Plus /></IconButton>
          <IconButton aria-label="Copiar"><Pixels rows={docPairRows} /></IconButton>
        </ToolRow>
        <ToolRow $gap={28} $indent={14}>
          <IconButton aria-label="Código de barras"><Barcode /></IconButton>
          <IconButton aria-label="Operario"><Pixels rows={faceRows} /></IconButton>
        </ToolRow>
        <Right $pad={25}>
          <ToolRow $gap={3}>
            <IconButton aria-label="Notas"><SmallDoc /></IconButton>
            <IconButton aria-label="Refrescar"><Refresh /></IconButton>
          </ToolRow>
        </Right>
      </WorkBar>
      <GridBox>
        <Sheet>
          <Table>
            <colgroup>{columns.map(([name, w]) => <col key={name} width={w} />)}</colgroup>
            <thead>
              <tr>{columns.map(([name, , cls]) => <th key={name} className={cls}>{name}</th>)}</tr>
            </thead>
            <tbody>
              <tr>
                <td>
                  <svg width="7" height="11" viewBox="0 0 7 11" fill="none" stroke="#000" strokeWidth="1.500"><path d="M1 1l4 4.500L1 10M1 4v3" /></svg>
                </td>
                <td>DIG25</td><td>Diagnostico 25 pts</td><td /><td /><td className="num">1.00</td><td>22</td><td>F</td><td /><td />
              </tr>
            </tbody>
          </Table>
        </Sheet>
        <ScrollBar><Space /><Thumb $size={17} /></ScrollBar>
        <ScrollBar row><Thumb $row $size={17} /><Space /></ScrollBar>
        <Corner />
      </GridBox>
      <Equipment>
        {equipment.map((name) => (
          <Tick key={name} $h={16}><TickBox type="checkbox" />{name}</Tick>
        ))}
      </Equipment>
    </Work>
  );
}

function BottomToolbar() {
  return (
    <BottomBar>
      <BottomButton $w={75} disabled><BottomIcon>Emitir<Stamp /></BottomIcon>0</BottomButton>
      <BottomButton $w={68}><BottomIcon><Pixels rows={docsRows} /></BottomIcon>Facturar</BottomButton>
      <BottomButton $w={68} disabled><BottomIcon><Pixels rows={docsRows} ink="#a0a0a0" /></BottomIcon>Entregar</BottomButton>
      <BottomButton $w={74} disabled><BottomIcon><Pixels rows={printerRows.map((r) => r.replace(/[gy]/g, 'w'))} ink="#909090" /></BottomIcon>Gar. fábrica</BottomButton>
      <BottomButton $w={66} disabled><BottomIcon><Pixels rows={manyDocsRows} ink="#909090" /></BottomIcon>Facturar Gar.</BottomButton>
      <BottomButton $w={66}><BottomIcon><Pixels rows={notepadRows} /></BottomIcon>Nota Interna</BottomButton>
      <BottomButton $w={58}><BottomIcon><Pixels rows={adapRows} /></BottomIcon>Adap. Fra.</BottomButton>
      <BottomButton $w={64}><BottomIcon><Pixels rows={printerRows} /></BottomIcon>Relación</BottomButton>
      <Divider />
      <BottomButton $w={58}><BottomIcon><Pixels rows={toolsRows} /></BottomIcon>Mecanicos</BottomButton>
      <BottomButton $w={56}><BottomIcon><Pixels rows={magnifierRows} /></BottomIcon>O.R.</BottomButton>
      <BottomButton $w={36}><BottomIcon><Pixels rows={fieldGlassRows} /></BottomIcon>Buscar</BottomButton>
    </BottomBar>
  );
}

function App() {
  return (
    <Frame>
      <GlobalStyle />
      <TitleBar>
        <AppIcon />
        <Title>Mantenimiento Ordenes de Rep.</Title>
        <WindowButtons>
          <WindowButton aria-label="Minimizar"><Dash size={10} /></WindowButton>
          <WindowButton aria-label="Maximizar">
            <svg width="10" height="8" viewBox="0 0 10 8"><path d="M1 1h8v6H1z" fill="none" stroke="#000" strokeWidth="2" /></svg>
          </WindowButton>
          <WindowButton $close aria-label="Cerrar">
            <svg width="9" height="8" viewBox="0 0 9 8"><path d="M1 0l7 8M8 0L1 8" stroke="#000" strokeWidth="2" /></svg>
          </WindowButton>
        </WindowButtons>
      </TitleBar>
      <Client>
        <MenuBar>{menu.map((m) => <a key={m} href="#">{m}</a>)}</MenuBar>
        <TopToolbar />
        <Header />
        <Body>
          <Pages>
            <Tabs>{tabs.map((t, i) => <Tab key={t} $on={i === 0}>{t}</Tab>)}</Tabs>
            <Page>
              <SidePanel />
              <WorkPanel />
            </Page>
          </Pages>
          <Options>{[...'OPCIONES'].map((c, i) => <span key={i}>{c}</span>)}</Options>
        </Body>
        <BottomToolbar />
        <StatusBar>
          <StatusCell />
          <StatusCell />
          <StatusCell>
            <svg width="14" height="14" viewBox="0 0 14 14" stroke="#a0a0a0" strokeWidth="1.500"><path d="M2 13L13 2M6 13l7-7M10 13l3-3" /></svg>
          </StatusCell>
        </StatusBar>
      </Client>
    </Frame>
  );
}

export default App;
